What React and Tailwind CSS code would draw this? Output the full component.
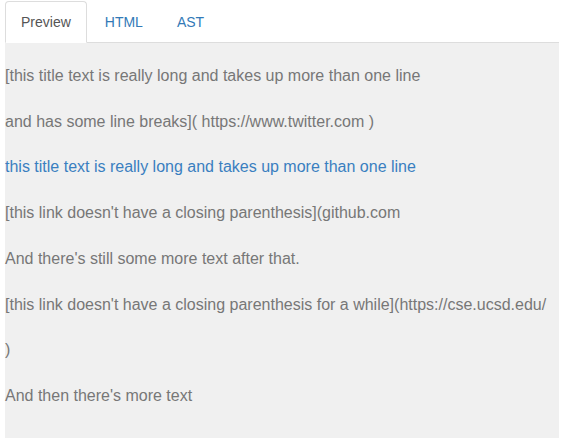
import { useState } from "react";

const tabs = ["Preview", "HTML", "AST"];

const lines = [
  { text: "[this title text is really long and takes up more than one line" },
  { text: "and has some line breaks]( https://www.twitter.com )" },
  { text: "this title text is really long and takes up more than one line", link: true },
  { text: "[this link doesn't have a closing parenthesis](github.com" },
  { text: "And there's still some more text after that." },
  { text: "[this link doesn't have a closing parenthesis for a while](https://cse.ucsd.edu/" },
  { text: ")" },
  { text: "And then there's more text" },
];

export default function App() {
  const [activo, setActivo] = useState("Preview");

  return (
    <div
      className="min-h-[438px] bg-white pt-[1px] pl-[5px] pr-[3px] flex flex-col"
      style={{ fontFamily: '"Liberation Sans", Arial, sans-serif' }}
    >
      {/* TABS */}
      <ul className="flex border-b border-[#ddd] text-[14px] leading-[20px]">
        {tabs.map((t) => (
          <li key={t} className="-mb-px mr-[2px]">
            <button
              onClick={() => setActivo(t)}
              className={
                t === activo
                  ? "block px-[15px] py-[10px] border border-[#ddd] border-b-transparent rounded-t-[4px] bg-white text-[#555]"
                  : "block px-[15px] py-[10px] border border-transparent rounded-t-[4px] text-[#337ab7]"
              }
            >
              {t}
            </button>
          </li>
        ))}
      </ul>

      {/* PREVIEW */}
      <div className="flex-1 bg-[#f0f0f0] pt-[22px] pb-[17px] text-[16px] leading-[22.86px] text-[#777]">
        {lines.map((l, i) => (
          <p key={i} className="mb-[22.86px] whitespace-nowrap">
            {l.link ? <a className="text-[#3a7fc0]">{l.text}</a> : l.text}
          </p>
        ))}
      </div>
    </div>
  );
}
